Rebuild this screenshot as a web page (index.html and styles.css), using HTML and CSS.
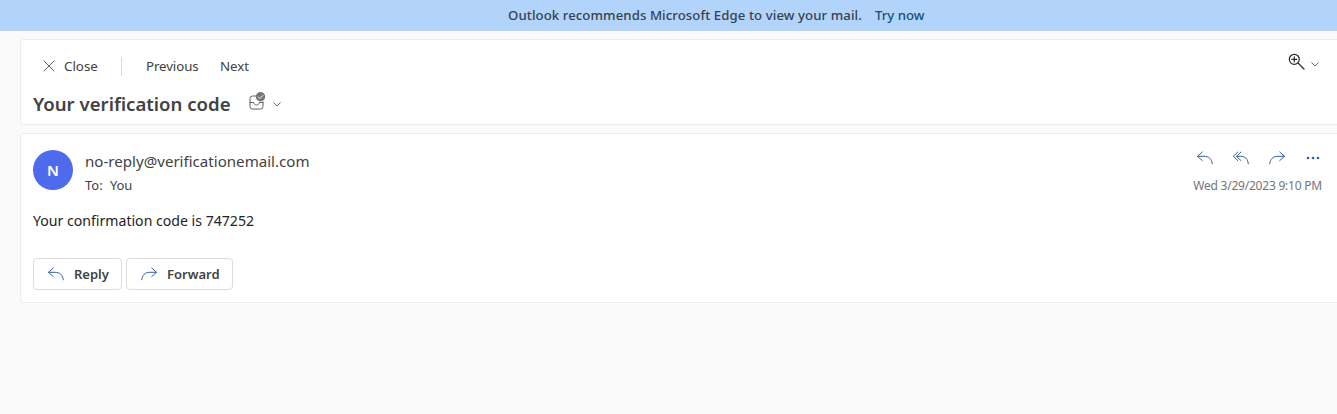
FILE: index.html
```html
<!DOCTYPE html>
<html lang="en">
<head>
<meta charset="utf-8">
<title>Your verification code</title>
<link rel="stylesheet" href="styles.css">
</head>
<body>
<svg width="0" height="0" class="defs">
  <symbol id="reply" viewBox="0 0 18 14"><path d="M6.300 1 1.500 5.300l4.800 4.300M1.700 5.300H8c4.800 0 7.800 2.700 8.300 7.500"/></symbol>
  <symbol id="chevron" viewBox="0 0 8 5"><path d="M.7.8 4 4.100 7.300.8"/></symbol>
</svg>
<div class="banner"><span class="banner-text">Outlook recommends Microsoft Edge to view your mail.</span><a class="banner-link">Try now</a></div>
<main class="page">
  <header class="card header">
    <div class="toolbar">
      <svg class="close-icon" viewBox="0 0 12 12"><path d="m1 1 10 10M11 1 1 11"/></svg>
      <span class="close">Close</span>
      <span class="divider"></span>
      <span class="previous">Previous</span>
      <span class="next">Next</span>
      <div class="zoom">
        <svg class="zoom-icon" viewBox="0 0 17 17"><circle cx="6.300" cy="6.300" r="5"/><path d="m10 10 6 6M6.300 3.800v5M3.800 6.300h5"/></svg>
        <svg class="chevron"><use href="#chevron"/></svg>
      </div>
    </div>
    <div class="subject">
      <h1 class="title">Your verification code</h1>
      <svg class="inbox-icon" viewBox="0 0 18 18"><path d="M8 4H4.500A2.500 2.500 0 0 0 2 6.500v8A2.500 2.500 0 0 0 4.500 17h8a2.500 2.500 0 0 0 2.500-2.500V10M2 10.500h3.700c.3 1.800 1.200 2.500 2.800 2.500s2.500-.7 2.800-2.500H15"/><circle class="badge" cx="12.500" cy="4.800" r="4.700"/><path class="tick" d="m10.400 5 1.500 1.500 3-3"/></svg>
      <svg class="chevron"><use href="#chevron"/></svg>
    </div>
  </header>
  <article class="card message">
    <div class="meta">
      <div class="avatar">N</div>
      <div class="people">
        <div class="sender">no-reply@verificationemail.com</div>
        <div class="recipient"><span class="to">To:</span><span class="you">You</span></div>
      </div>
      <div class="side">
        <div class="actions">
          <svg class="arrow"><use href="#reply"/></svg>
          <svg class="arrow" viewBox="0 0 18 14"><path d="M5.800 1 1.300 5.300l4.500 4.300M9 1 4.500 5.300 9 9.600M4.700 5.300h3.900c4.500 0 7.400 2.700 7.700 7.500"/></svg>
          <svg class="arrow flip"><use href="#reply"/></svg>
          <svg class="more" viewBox="0 0 14 4"><circle cx="2" cy="2" r="1.300"/><circle cx="7" cy="2" r="1.300"/><circle cx="12" cy="2" r="1.300"/></svg>
        </div>
        <div class="date">Wed 3/29/2023 9:10 PM</div>
      </div>
    </div>
    <p class="body">Your confirmation code is 747252</p>
    <div class="buttons">
      <button class="button reply"><svg class="arrow"><use href="#reply"/></svg><span class="reply-text">Reply</span></button>
      <button class="button forward"><svg class="arrow flip"><use href="#reply"/></svg><span class="forward-text">Forward</span></button>
    </div>
  </article>
</main>
</body>
</html>
```
FILE: styles.css
```css
* { box-sizing: border-box; }
body { margin: 0; height: 414px; overflow: hidden; background: #fafafa; font: 13.3px/20px "Noto Sans", sans-serif; color: #424242; white-space: nowrap; }
svg { display: block; flex: none; fill: none; stroke: #616161; stroke-width: 1; stroke-linecap: round; stroke-linejoin: round; }
.defs { position: absolute; }
.banner { height: 31px; background: #b3d4fa; border-bottom: 1px solid #bdd3ee; display: flex; padding: 5px 0 0 508px; font-size: 13.200px; font-weight: 500; color: #37424f; }
.banner-text { width: 367px; letter-spacing: .08px; }
.banner-link { color: #174e80; }
.page { padding: 8px 0 0 20px; }
.card { background: #fff; border: 1px solid #ededed; border-right: 0; border-radius: 4px 0 0 4px; }
.header { height: 86px; }
.toolbar { display: flex; align-items: center; height: 52px; padding-left: 22px; }
.close-icon { width: 12px; height: 12px; }
.close { width: 57px; margin-left: 9px; }
.divider { width: 1px; height: 19px; background: #dcdcdc; margin-right: 24px; }
.previous { width: 74px; letter-spacing: -.1px; }
.zoom { display: flex; align-items: center; gap: 6px; margin: -9px 18px 0 auto; }
.zoom-icon { width: 17px; height: 17px; stroke: #292929; stroke-width: 1.200; }
.chevron { width: 8px; height: 5px; }
.zoom .chevron { margin-top: 5px; }
.subject { display: flex; align-items: center; padding-left: 12px; height: 24px; }
.title { margin: 0; width: 215px; font-size: 18.600px; line-height: 24px; font-weight: 600; }
.inbox-icon { width: 18px; height: 18px; margin: -6px 7px 0 0; }
.badge { fill: #757575; stroke: none; }
.tick { stroke: #fff; }
.message { margin-top: 8px; height: 170px; padding: 16px 15px 0 12px; }
.meta { display: flex; height: 44px; }
.avatar { width: 40px; height: 40px; border-radius: 50%; background: #4f6bed; color: #fff; font-size: 15px; font-weight: 600; line-height: 40px; text-align: center; }
.people { margin-left: 12px; }
.sender { font-size: 15.100px; line-height: 22px; }
.recipient { display: flex; font-size: 13px; margin-top: 3px; }
.to { width: 25px; }
.you { letter-spacing: -.2px; }
.side { margin-left: auto; }
.actions { display: flex; align-items: center; justify-content: flex-end; gap: 18px; height: 16px; }
.arrow { width: 18px; height: 14px; stroke: #355f9a; }
.flip { transform: scaleX(-1); }
.more { width: 14px; height: 4px; margin: 0 2px; fill: #355f9a; stroke: none; }
.date { font-size: 12px; letter-spacing: -.22px; color: #757575; margin-top: 10px; text-align: right; }
.body { margin: 17px 0 0; font-size: 14.100px; color: #242424; }
.buttons { display: flex; gap: 4px; margin-top: 27px; }
.button { display: flex; align-items: center; height: 32px; padding: 0 0 0 13px; background: #fff; border: 1px solid #dcdcdc; border-radius: 4px; font: 600 13px/20px "Noto Sans", sans-serif; color: #424242; gap: 9px; white-space: nowrap; }
.reply { width: 89px; }
.forward { width: 107px; }
```
